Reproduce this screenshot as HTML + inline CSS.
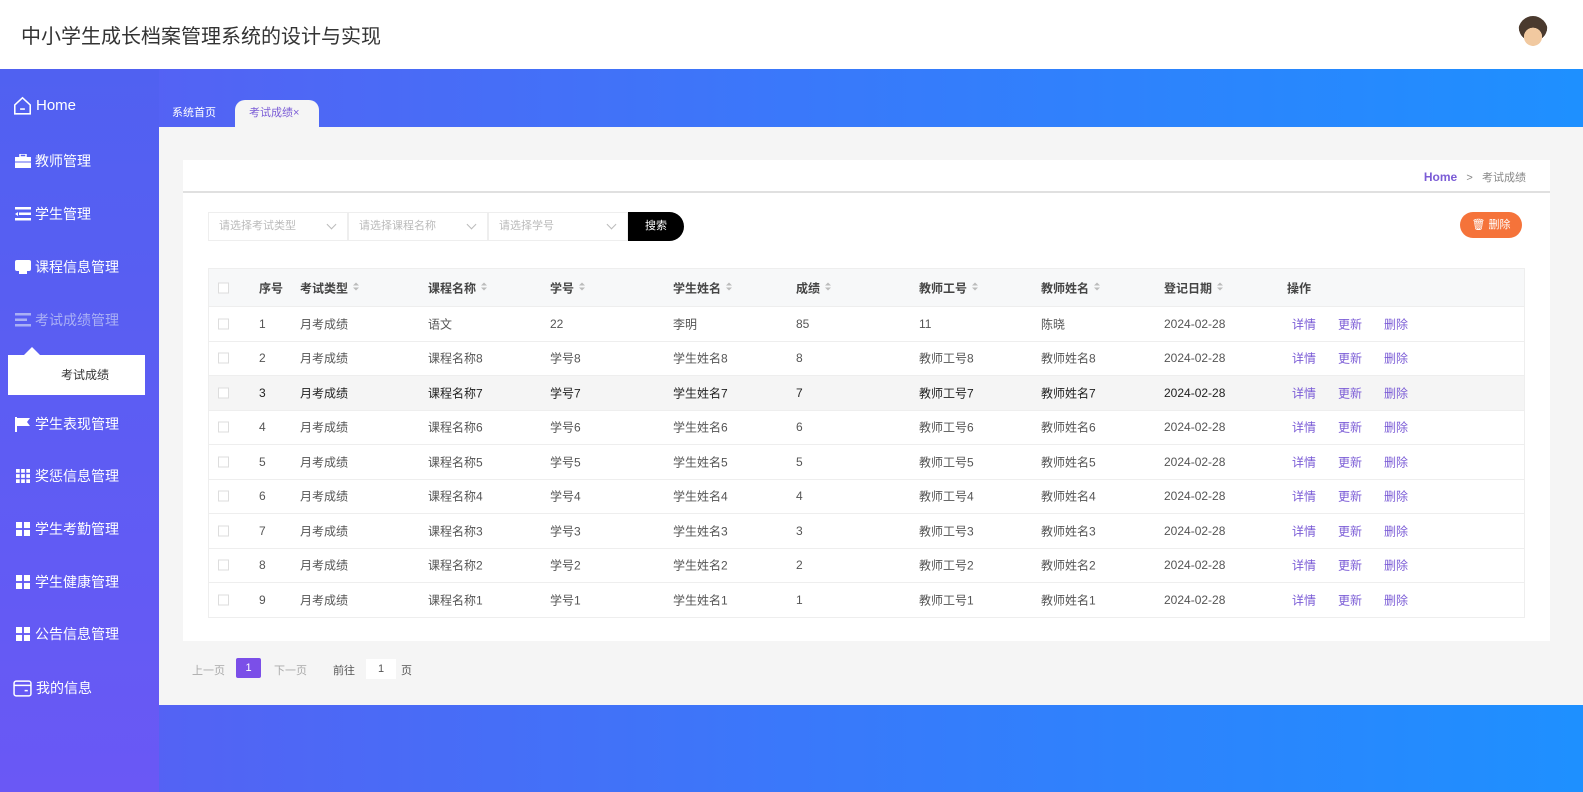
<!DOCTYPE html>
<html><head><meta charset="utf-8"><style>
*{margin:0;padding:0;box-sizing:border-box}
body{width:1583px;height:792px;overflow:hidden;font-family:"Liberation Sans","Noto Sans CJK SC",sans-serif;position:relative;background:linear-gradient(90deg,#5a5df2 0%,#3a78fa 50%,#1e90ff 100%)}
.hdr{position:absolute;left:0;top:0;width:1583px;height:69px;background:#fff}
.hdr h1{position:absolute;left:21px;top:20px;font-size:20px;font-weight:normal;color:#333}
.av{position:absolute;left:1518px;top:16px;width:30px;height:32px;border-radius:50%;background:radial-gradient(circle at 50% 65%,#f1c9a0 0 35%,transparent 36%),radial-gradient(circle at 50% 35%,#4a3a2e 0 55%,transparent 56%)}
.side{position:absolute;left:0;top:69px;width:159px;height:723px;background:linear-gradient(180deg,#5061f1,#6a58f5)}
.mi{position:absolute;left:15px;color:#fff;font-size:14px;display:flex;align-items:center;gap:4px}
.ic{width:16px;height:14px;display:inline-block}
.pop{position:absolute;left:8px;top:355px;width:137px;height:40px;background:#fff;font-size:12px;color:#333;text-align:center;line-height:40px;padding-left:17px}
.pop:before{content:"";position:absolute;left:16px;top:-8px;border:8px solid transparent;border-top:0;border-bottom-color:#fff}
.tab{position:absolute;top:100px;height:27px;font-size:11px;line-height:27px;padding:0 13px}
.panel{position:absolute;left:159px;top:127px;width:1424px;height:578px;background:#f5f5f5}
.card{position:absolute;left:183px;top:160px;width:1367px;height:481px;background:#fff}
.bc{position:absolute;left:0;top:0;width:1367px;height:33px;border-bottom:2px solid #e0e0e0;font-size:11px;color:#888}
.sel{position:absolute;top:212px;height:29px;width:140px;border:1px solid #eee;font-size:11px;color:#bbb;line-height:27px;padding-left:10px}
.sel:after{content:"";position:absolute;right:12px;top:8px;width:6px;height:6px;border-right:1px solid #bbb;border-bottom:1px solid #bbb;transform:rotate(45deg)}
.tbl{position:absolute;left:208px;top:268px;width:1317px;border:1px solid #eee;border-bottom:none}
.row{height:34.5px;border-bottom:1px solid #eee;position:relative;font-size:12px;color:#555}
.row span{position:absolute;top:50%;transform:translateY(-50%);white-space:nowrap}
.th{height:38px;background:#f7f8f9;font-weight:bold;color:#444}
.cb{width:11px;height:11px;border:1px solid #ddd;background:#fff;left:9px}
.srt{display:inline-block;width:0;vertical-align:middle;margin-left:5px;position:relative;top:-5px;border:3px solid transparent;border-bottom-color:#bbb;border-top:0}
.srt:after{content:"";position:absolute;left:-3px;top:5px;border:3px solid transparent;border-top-color:#bbb;border-bottom:0}
.op{color:#7b5cd6}
</style></head><body>
<div class="hdr"><h1>中小学生成长档案管理系统的设计与实现</h1><div class="av"></div></div>
<div class="side">
<div class="mi" style="top:27px;font-size:15px;left:13px"><svg class="ic" viewBox="0 0 16 16" style="width:19px;height:19px"><path d="M1.5 7.5L8 1.5l6.5 6V15h-13z" fill="none" stroke="#fff" stroke-width="1.3"/><path d="M6 11h4" stroke="#fff" stroke-width="1.3"/></svg>Home</div>
<div class="mi" style="top:82px"><svg class="ic" viewBox="0 0 16 14"><rect x="5" y="0" width="6" height="3" fill="none" stroke="#fff" stroke-width="1.5"/><rect x="0" y="3" width="16" height="11" fill="#fff"/><path d="M0 8h16" stroke="#5a60f0"/></svg>教师管理</div>
<div class="mi" style="top:135px"><svg class="ic" viewBox="0 0 16 14"><rect y="0" width="16" height="2.5" fill="#fff"/><rect x="4" y="5.5" width="12" height="2.5" fill="#fff"/><rect y="11" width="16" height="2.5" fill="#fff"/><path d="M0 7l3-2v4z" fill="#fff"/></svg>学生管理</div>
<div class="mi" style="top:188px"><svg class="ic" viewBox="0 0 16 14"><rect width="16" height="11" rx="2" fill="#fff"/><rect x="4" y="11" width="8" height="3" fill="#fff"/></svg>课程信息管理</div>
<div class="mi" style="top:241px;color:#aab0f5"><svg class="ic" viewBox="0 0 16 14"><rect y="0" width="16" height="2.5" fill="#aab0f5"/><rect y="5.5" width="12" height="2.5" fill="#aab0f5"/><rect y="11" width="16" height="2.5" fill="#aab0f5"/></svg>考试成绩管理</div>
<div class="mi" style="top:345px"><svg class="ic" viewBox="0 0 16 14" style="height:16px"><path d="M1 0v16" stroke="#fff" stroke-width="2"/><path d="M2 1h13l-3 4 3 4H2z" fill="#fff"/></svg>学生表现管理</div>
<div class="mi" style="top:397px"><svg class="ic" viewBox="0 0 15 15"><g fill="#fff"><rect width="4" height="4"/><rect x="5.5" width="4" height="4"/><rect x="11" width="4" height="4"/><rect y="5.5" width="4" height="4"/><rect x="5.5" y="5.5" width="4" height="4"/><rect x="11" y="5.5" width="4" height="4"/><rect y="11" width="4" height="4"/><rect x="5.5" y="11" width="4" height="4"/><rect x="11" y="11" width="4" height="4"/></g></svg>奖惩信息管理</div>
<div class="mi" style="top:450px"><svg class="ic" viewBox="0 0 15 15"><g fill="#fff"><rect width="6.5" height="6.5"/><rect x="8.5" width="6.5" height="6.5"/><rect y="8.5" width="6.5" height="6.5"/><rect x="8.5" y="8.5" width="6.5" height="6.5"/></g></svg>学生考勤管理</div>
<div class="mi" style="top:503px"><svg class="ic" viewBox="0 0 15 15"><g fill="#fff"><rect width="6.5" height="6.5"/><rect x="8.5" width="6.5" height="6.5"/><rect y="8.5" width="6.5" height="6.5"/><rect x="8.5" y="8.5" width="6.5" height="6.5"/></g></svg>学生健康管理</div>
<div class="mi" style="top:555px"><svg class="ic" viewBox="0 0 15 15"><g fill="#fff"><rect width="6.5" height="6.5"/><rect x="8.5" width="6.5" height="6.5"/><rect y="8.5" width="6.5" height="6.5"/><rect x="8.5" y="8.5" width="6.5" height="6.5"/></g></svg>公告信息管理</div>
<div class="mi" style="top:609px;left:13px"><svg class="ic" viewBox="0 0 18 16" style="width:19px;height:17px"><rect x="1" y="1" width="16" height="14" rx="2" fill="none" stroke="#fff" stroke-width="1.4"/><path d="M1 5h16M11 10h3" stroke="#fff" stroke-width="1.4"/></svg>我的信息</div>
</div>
<div class="pop">考试成绩</div>
<div class="tab" style="left:159px;color:#fff">系统首页</div>
<div class="tab" style="left:235px;width:84px;padding:0 0 0 14px;background:#f5f5f5;color:#7b5cd6;border-radius:10px 10px 0 0">考试成绩×</div>
<div class="panel"></div>
<div class="card"><div class="bc"><span style="position:absolute;right:24px;top:9px"><b style="color:#7b5cd6;font-size:12px">Home</b>&nbsp;&nbsp; &gt; &nbsp;&nbsp;考试成绩</span></div></div>
<div class="sel" style="left:208px">请选择考试类型</div>
<div class="sel" style="left:348px">请选择课程名称</div>
<div class="sel" style="left:488px">请选择学号</div>
<div style="position:absolute;left:628px;top:212px;width:56px;height:29px;background:#000;color:#fff;font-size:11px;line-height:29px;text-align:center;border-radius:0 15px 15px 0">搜索</div>
<div style="position:absolute;left:1460px;top:212px;width:62px;height:26px;background:#f5733a;color:#fff;font-size:11px;line-height:26px;text-align:center;border-radius:13px">🗑 删除</div>
<div class="tbl">
<div class="row th"><span class="cb"></span><span style="left:50px">序号</span><span style="left:91px">考试类型<i class="srt"></i></span><span style="left:219px">课程名称<i class="srt"></i></span><span style="left:341px">学号<i class="srt"></i></span><span style="left:464px">学生姓名<i class="srt"></i></span><span style="left:587px">成绩<i class="srt"></i></span><span style="left:710px">教师工号<i class="srt"></i></span><span style="left:832px">教师姓名<i class="srt"></i></span><span style="left:955px">登记日期<i class="srt"></i></span><span style="left:1078px">操作</span></div>
<div class="row"><span class="cb"></span><span style="left:50px">1</span><span style="left:91px">月考成绩</span><span style="left:219px">语文</span><span style="left:341px">22</span><span style="left:464px">李明</span><span style="left:587px">85</span><span style="left:710px">11</span><span style="left:832px">陈晓</span><span style="left:955px">2024-02-28</span><span class="op" style="left:1083px">详情</span><span class="op" style="left:1129px">更新</span><span class="op" style="left:1175px">删除</span></div>
<div class="row"><span class="cb"></span><span style="left:50px">2</span><span style="left:91px">月考成绩</span><span style="left:219px">课程名称8</span><span style="left:341px">学号8</span><span style="left:464px">学生姓名8</span><span style="left:587px">8</span><span style="left:710px">教师工号8</span><span style="left:832px">教师姓名8</span><span style="left:955px">2024-02-28</span><span class="op" style="left:1083px">详情</span><span class="op" style="left:1129px">更新</span><span class="op" style="left:1175px">删除</span></div>
<div class="row" style="background:#f5f5f5;color:#222"><span class="cb"></span><span style="left:50px">3</span><span style="left:91px">月考成绩</span><span style="left:219px">课程名称7</span><span style="left:341px">学号7</span><span style="left:464px">学生姓名7</span><span style="left:587px">7</span><span style="left:710px">教师工号7</span><span style="left:832px">教师姓名7</span><span style="left:955px">2024-02-28</span><span class="op" style="left:1083px">详情</span><span class="op" style="left:1129px">更新</span><span class="op" style="left:1175px">删除</span></div>
<div class="row"><span class="cb"></span><span style="left:50px">4</span><span style="left:91px">月考成绩</span><span style="left:219px">课程名称6</span><span style="left:341px">学号6</span><span style="left:464px">学生姓名6</span><span style="left:587px">6</span><span style="left:710px">教师工号6</span><span style="left:832px">教师姓名6</span><span style="left:955px">2024-02-28</span><span class="op" style="left:1083px">详情</span><span class="op" style="left:1129px">更新</span><span class="op" style="left:1175px">删除</span></div>
<div class="row"><span class="cb"></span><span style="left:50px">5</span><span style="left:91px">月考成绩</span><span style="left:219px">课程名称5</span><span style="left:341px">学号5</span><span style="left:464px">学生姓名5</span><span style="left:587px">5</span><span style="left:710px">教师工号5</span><span style="left:832px">教师姓名5</span><span style="left:955px">2024-02-28</span><span class="op" style="left:1083px">详情</span><span class="op" style="left:1129px">更新</span><span class="op" style="left:1175px">删除</span></div>
<div class="row"><span class="cb"></span><span style="left:50px">6</span><span style="left:91px">月考成绩</span><span style="left:219px">课程名称4</span><span style="left:341px">学号4</span><span style="left:464px">学生姓名4</span><span style="left:587px">4</span><span style="left:710px">教师工号4</span><span style="left:832px">教师姓名4</span><span style="left:955px">2024-02-28</span><span class="op" style="left:1083px">详情</span><span class="op" style="left:1129px">更新</span><span class="op" style="left:1175px">删除</span></div>
<div class="row"><span class="cb"></span><span style="left:50px">7</span><span style="left:91px">月考成绩</span><span style="left:219px">课程名称3</span><span style="left:341px">学号3</span><span style="left:464px">学生姓名3</span><span style="left:587px">3</span><span style="left:710px">教师工号3</span><span style="left:832px">教师姓名3</span><span style="left:955px">2024-02-28</span><span class="op" style="left:1083px">详情</span><span class="op" style="left:1129px">更新</span><span class="op" style="left:1175px">删除</span></div>
<div class="row"><span class="cb"></span><span style="left:50px">8</span><span style="left:91px">月考成绩</span><span style="left:219px">课程名称2</span><span style="left:341px">学号2</span><span style="left:464px">学生姓名2</span><span style="left:587px">2</span><span style="left:710px">教师工号2</span><span style="left:832px">教师姓名2</span><span style="left:955px">2024-02-28</span><span class="op" style="left:1083px">详情</span><span class="op" style="left:1129px">更新</span><span class="op" style="left:1175px">删除</span></div>
<div class="row"><span class="cb"></span><span style="left:50px">9</span><span style="left:91px">月考成绩</span><span style="left:219px">课程名称1</span><span style="left:341px">学号1</span><span style="left:464px">学生姓名1</span><span style="left:587px">1</span><span style="left:710px">教师工号1</span><span style="left:832px">教师姓名1</span><span style="left:955px">2024-02-28</span><span class="op" style="left:1083px">详情</span><span class="op" style="left:1129px">更新</span><span class="op" style="left:1175px">删除</span></div>
</div>
<div style="position:absolute;left:192px;top:662px;font-size:11px;color:#aaa">上一页</div>
<div style="position:absolute;left:236px;top:658px;width:25px;height:20px;background:#7b4fe8;color:#fff;font-size:11px;text-align:center;line-height:20px;border-radius:2px">1</div>
<div style="position:absolute;left:274px;top:662px;font-size:11px;color:#aaa">下一页</div>
<div style="position:absolute;left:333px;top:662px;font-size:11px;color:#555">前往</div>
<div style="position:absolute;left:366px;top:659px;width:30px;height:20px;background:#fff;font-size:11px;text-align:center;line-height:20px;color:#555">1</div>
<div style="position:absolute;left:401px;top:662px;font-size:11px;color:#555">页</div>
</body></html>
